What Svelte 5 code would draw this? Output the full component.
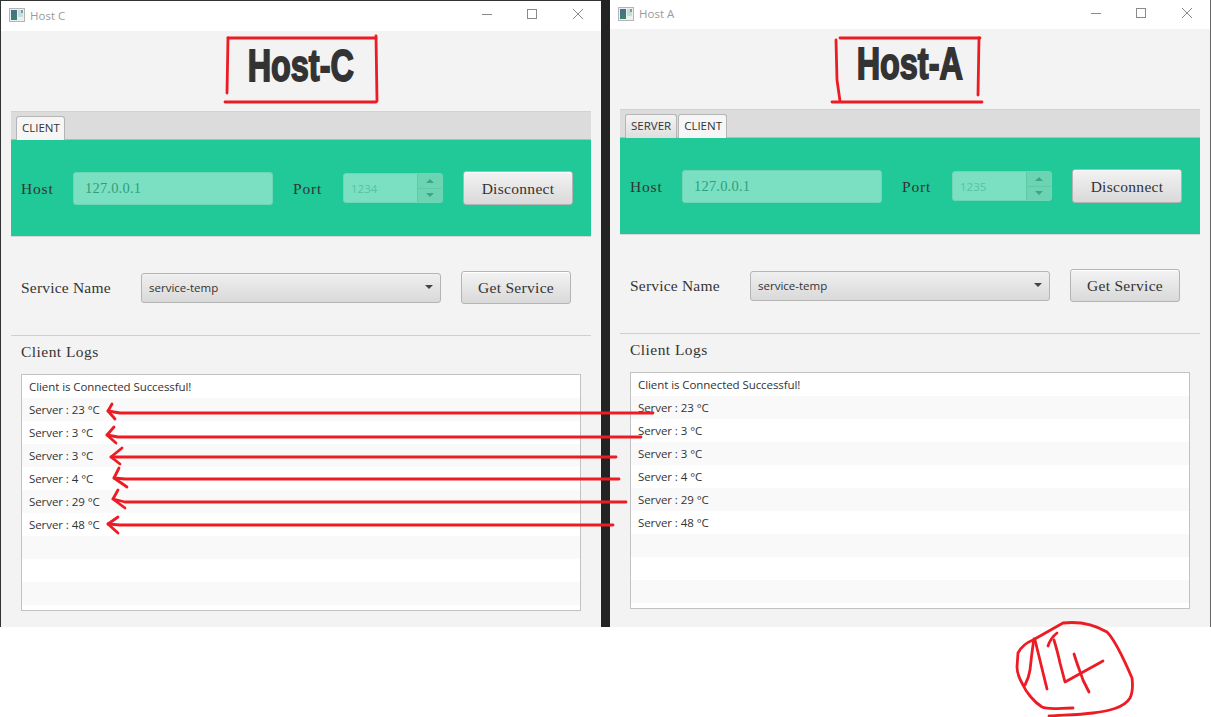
<script>
  const logs = ['Client is Connected Successful!', 'Server : 23 °C', 'Server : 3 °C', 'Server : 3 °C', 'Server : 4 °C', 'Server : 29 °C', 'Server : 48 °C', '', '', ''];
  const windows = [
    { id: 'c', title: 'Host C', heading: 'Host-C', tabs: ['CLIENT'], port: '1234' },
    { id: 'a', title: 'Host A', heading: 'Host-A', tabs: ['SERVER', 'CLIENT'], port: '1235' }
  ];
  const ink = [
    'M228 38 L376 38', 'M376 36 L377 101', 'M225 102 L376 102', 'M228 38 L227 93',
    'M840 38 L980 38', 'M979 38 L978 95', 'M832 102 L982 102', 'M836 40 L837 80 L840 101',
    'M653 413 L120 413 L108 411', 'M112 404 L108 411 L115 419',
    'M641 437 L118 437 L107 435', 'M114 427 L107 435 L116 443',
    'M616 457 L111 457', 'M122 448 L111 457 L120 464',
    'M619 479 L125 479 L114 478', 'M119 468 L114 478 L127 487',
    'M626 502 L125 502 L113 499', 'M118 490 L113 499 L125 508',
    'M613 525 L120 525 L108 524', 'M118 517 L108 524 L118 533',
    'M1073 708 C1060 708 1048 710 1042 707 C1034 702 1026 692 1023 685 C1019 678 1017 672 1017 667 L1018 653 C1022 645 1028 642 1033 640 L1063 623 C1072 622 1090 622 1107 632 C1115 640 1126 664 1132 678 C1133 686 1133 692 1130 698 C1124 708 1108 711 1093 713 C1078 715 1062 715 1049 716',
    'M1034 639 C1032 650 1031 662 1030 670 C1029 677 1027 681 1025 685',
    'M1035 640 L1047 689',
    'M1048 646 C1050 640 1053 636 1057 633',
    'M1054 640 C1057 650 1059 658 1060 663 L1065 682 L1103 661',
    'M1074 654 C1077 664 1081 674 1083 680 L1089 692'
  ];
</script>

{#snippet win(w)}
  <section class="window {w.id}">
    <header class="titlebar">
      <svg class="appicon" width="16" height="14" viewBox="0 0 16 14">
        <rect x="0.5" y="0.5" width="15" height="13" fill="#eef0f0" stroke="#b5b5b5" />
        <rect x="2" y="2" width="6" height="10" fill="#3c7f78" />
        <rect x="2" y="2" width="6" height="4" fill="#4a6f8c" />
        <rect x="9" y="2" width="5" height="7" fill="#c9dcd8" />
        <rect x="12" y="2" width="2" height="3" fill="#6fa79c" />
      </svg>
      <span class="wintitle">{w.title}</span>
      <svg class="controls" width="102" height="12" viewBox="0 0 102 12">
        <path d="M0 5.5 H10" stroke="#8a8a8a" fill="none" />
        <rect x="45.5" y="0.5" width="9" height="9" stroke="#8a8a8a" fill="none" />
        <path d="M91 0 L101 10 M101 0 L91 10" stroke="#8a8a8a" fill="none" />
      </svg>
    </header>
    <div class="heading"><h1>{w.heading}</h1></div>
    <div class="tabpane">
      <div class="tabbar">
        {#each w.tabs as t, i}
          <span class="tab" class:active={i === w.tabs.length - 1}>{t}</span>
        {/each}
      </div>
      <div class="green">
        <span class="label hostlabel">Host</span>
        <span class="input">127.0.0.1</span>
        <span class="label portlabel">Port</span>
        <span class="spinner">
          <span class="spinval">{w.port}</span>
          <span class="spinbtns">
            <span class="spinbtn"><i class="up"></i></span>
            <span class="spinbtn"><i class="down"></i></span>
          </span>
        </span>
        <button class="btn disconnect">Disconnect</button>
      </div>
    </div>
    <div class="service">
      <span class="label servicelabel">Service Name</span>
      <span class="combo">service-temp<i class="caret"></i></span>
      <button class="btn getservice">Get Service</button>
    </div>
    <hr class="sep" />
    <div class="logtitle">Client Logs</div>
    <ul class="list">
      {#each logs as line}
        <li>{line}</li>
      {/each}
    </ul>
  </section>
{/snippet}

<main class="screen">
  <div class="desk">
    {@render win(windows[0])}
    {@render win(windows[1])}
  </div>
  <svg class="ink" width="1211" height="717" viewBox="0 0 1211 717">
    {#each ink as d}
      <path {d} />
    {/each}
  </svg>
</main>

<style>
  :global(body) {
    margin: 0;
    background: #fff;
  }
  .screen {
    position: relative;
    width: 1211px;
    height: 717px;
    overflow: hidden;
    background: #fff;
  }
  .desk {
    display: flex;
    gap: 9px;
    height: 627px;
    background: #232323;
  }
  .window {
    width: 601px;
    box-sizing: border-box;
    display: flex;
    flex-direction: column;
    background: #f3f3f3;
    font-family: "Open Sans", sans-serif;
    color: #333;
  }
  .window.c {
    border-left: 1px solid #333;
    border-top: 1px solid #333;
  }
  .window.a {
    border-right: 1px solid #666;
  }
  .titlebar {
    display: flex;
    align-items: center;
    height: 30px;
    flex: none;
    background: #fff;
    padding: 0 0 2px 8px;
    box-sizing: border-box;
  }
  .a .titlebar {
    height: 29px;
  }
  .wintitle {
    margin-left: 5px;
    font-size: 11.5px;
    color: #9b9b9b;
  }
  .controls {
    margin-left: auto;
    margin-right: 17px;
  }
  .heading {
    height: 80px;
    flex: none;
    display: flex;
    justify-content: center;
    align-items: center;
    box-sizing: border-box;
    padding-bottom: 10px;
  }
  h1 {
    margin: 0;
    font-family: "Liberation Sans", sans-serif;
    font-weight: 700;
    font-size: 45px;
    line-height: 46px;
    color: #333;
    -webkit-text-stroke: 1.8px #333;
    transform: scaleX(0.72);
  }
  .tabpane {
    margin: 0 10px;
    flex: none;
    border-bottom: 1px solid #d6d6d6;
  }
  .tabbar {
    height: 29px;
    box-sizing: border-box;
    background: #dcdcdc;
    border-top: 1px solid #d2d2d2;
    border-bottom: 1px solid #b9b9b9;
    display: flex;
    align-items: flex-end;
    gap: 1px;
    padding-left: 5px;
  }
  .tab {
    height: 24px;
    box-sizing: border-box;
    margin-bottom: -1px;
    padding: 0 5px 2px;
    display: flex;
    align-items: center;
    font-size: 11.5px;
    color: #333;
    border: 1px solid #b5b5b5;
    border-bottom: 0;
    border-radius: 3px 3px 0 0;
    background: linear-gradient(#f4f4f4, #dedede);
  }
  .tab.active {
    background: #f6f6f6;
    padding-right: 4px;
  }
  .green {
    height: 96px;
    background: #20c997;
    display: flex;
    align-items: center;
    padding-left: 10px;
  }
  .label {
    font-family: "Liberation Serif", serif;
    font-size: 15.5px;
    letter-spacing: 0.45px;
    color: #333;
  }
  .hostlabel {
    width: 52px;
    flex: none;
    letter-spacing: 0.8px;
    padding-top: 2px;
    box-sizing: border-box;
  }
  .input {
    width: 200px;
    height: 33px;
    flex: none;
    box-sizing: border-box;
    padding-left: 11px;
    display: flex;
    align-items: center;
    background: #7be0c1;
    border: 1px solid #6dd6b5;
    border-radius: 3px;
    font-family: "Liberation Serif", serif;
    font-size: 14.5px;
    letter-spacing: 0.2px;
    color: #2f9e7c;
  }
  .portlabel {
    width: 50px;
    flex: none;
    margin-left: 20px;
    letter-spacing: 0.8px;
    padding-top: 2px;
    box-sizing: border-box;
  }
  .spinner {
    width: 100px;
    height: 30px;
    flex: none;
    box-sizing: border-box;
    display: flex;
    background: #7be0c1;
    border: 1px solid #6dd6b5;
    border-radius: 3px;
  }
  .spinval {
    flex: 1;
    padding-left: 7px;
    display: flex;
    align-items: center;
    font-size: 11.5px;
    color: #55c3a0;
  }
  .spinbtns {
    width: 24px;
    display: flex;
    flex-direction: column;
    border-left: 1px solid #5fc9a8;
    background: #6dd4b3;
  }
  .spinbtn {
    flex: 1;
    display: flex;
    align-items: center;
    justify-content: center;
  }
  .spinbtn + .spinbtn {
    border-top: 1px solid #5fc9a8;
  }
  .up, .down {
    width: 0;
    height: 0;
    border-left: 4px solid transparent;
    border-right: 4px solid transparent;
  }
  .up {
    border-bottom: 4px solid #3fa685;
  }
  .down {
    border-top: 4px solid #3fa685;
  }
  .btn {
    width: 110px;
    flex: none;
    box-sizing: border-box;
    padding: 1px 0 0;
    font-family: "Liberation Serif", serif;
    font-size: 15.5px;
    letter-spacing: 0.3px;
    color: #333;
    background: linear-gradient(#f3f3f3, #d9d9d9);
    border: 1px solid #b4b4b4;
    border-radius: 3px;
    box-shadow: 0 1px 0 #fff inset;
  }
  .disconnect {
    height: 34px;
    margin-left: 20px;
  }
  .service {
    flex: none;
    margin-top: 34px;
    padding-left: 20px;
    height: 33px;
    display: flex;
    align-items: center;
  }
  .servicelabel {
    width: 120px;
    flex: none;
    letter-spacing: 0.2px;
  }
  .combo {
    position: relative;
    width: 300px;
    height: 30px;
    flex: none;
    box-sizing: border-box;
    padding-left: 7px;
    display: flex;
    align-items: center;
    font-size: 11.5px;
    color: #333;
    background: linear-gradient(#efefef, #d9d9d9);
    border: 1px solid #b4b4b4;
    border-radius: 3px;
  }
  .caret {
    position: absolute;
    right: 7px;
    top: 11px;
    width: 0;
    height: 0;
    border-left: 4px solid transparent;
    border-right: 4px solid transparent;
    border-top: 4px solid #444;
  }
  .getservice {
    height: 33px;
    margin-left: 20px;
  }
  .sep {
    flex: none;
    margin: 31px 10px 0;
    height: 0;
    border: 0;
    border-top: 1px solid #cfcfcf;
  }
  .logtitle {
    flex: none;
    height: 38px;
    box-sizing: border-box;
    padding: 6px 0 0 20px;
    font-family: "Liberation Serif", serif;
    font-size: 15.5px;
    letter-spacing: 0.45px;
    line-height: 20px;
    color: #333;
  }
  .list {
    list-style: none;
    flex: none;
    box-sizing: border-box;
    height: 237px;
    margin: 0 20px;
    padding: 0;
    background: #fff;
    border: 1px solid #c2c2c2;
  }
  .list li {
    height: 23px;
    box-sizing: border-box;
    padding-left: 7px;
    font-size: 11.5px;
    letter-spacing: -0.07px;
    line-height: 23px;
    color: #333;
    background: #fff;
  }
  .list li:nth-child(even) {
    background: #f9f9f9;
  }
  .ink {
    position: absolute;
    inset: 0;
    pointer-events: none;
  }
  .ink path {
    fill: none;
    stroke: #ed1c24;
    stroke-width: 2.8;
    stroke-linecap: round;
    stroke-linejoin: round;
  }
</style>
